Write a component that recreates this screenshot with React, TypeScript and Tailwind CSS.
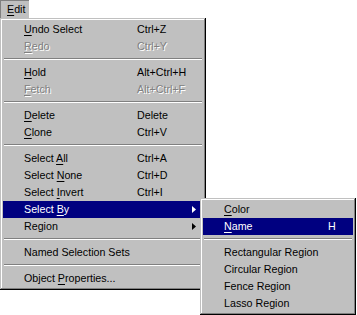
import React from 'react';

type Item =
  | { sep: true }
  | {
      sep?: false;
      label: string;
      mn?: number;
      shortcut?: string;
      disabled?: boolean;
      active?: boolean;
      arrow?: boolean;
    };

const mainItems: Item[] = [
  { label: 'Undo Select', mn: 0, shortcut: 'Ctrl+Z' },
  { label: 'Redo', mn: 0, shortcut: 'Ctrl+Y', disabled: true },
  { sep: true },
  { label: 'Hold', mn: 0, shortcut: 'Alt+Ctrl+H' },
  { label: 'Fetch', mn: 0, shortcut: 'Alt+Ctrl+F', disabled: true },
  { sep: true },
  { label: 'Delete', mn: 0, shortcut: 'Delete' },
  { label: 'Clone', mn: 0, shortcut: 'Ctrl+V' },
  { sep: true },
  { label: 'Select All', mn: 7, shortcut: 'Ctrl+A' },
  { label: 'Select None', mn: 7, shortcut: 'Ctrl+D' },
  { label: 'Select Invert', mn: 7, shortcut: 'Ctrl+I' },
  { label: 'Select By', mn: 7, arrow: true, active: true },
  { label: 'Region', arrow: true },
  { sep: true },
  { label: 'Named Selection Sets' },
  { sep: true },
  { label: 'Object Properties...', mn: 7 },
];

const subItems: Item[] = [
  { label: 'Color', mn: 0 },
  { label: 'Name', mn: 0, shortcut: 'H', active: true },
  { sep: true },
  { label: 'Rectangular Region' },
  { label: 'Circular Region' },
  { label: 'Fence Region' },
  { label: 'Lasso Region' },
];

function Label({ text, mn }: { text: string; mn?: number }) {
  if (mn === undefined) return <>{text}</>;
  return (
    <>
      {text.slice(0, mn)}
      <span className="underline underline-offset-[2px] decoration-1">{text[mn]}</span>
      {text.slice(mn + 1)}
    </>
  );
}

function Menu({ items, labelWidth, className }: { items: Item[]; labelWidth: string; className: string }) {
  return (
    <div
      className={`bg-[#c0c0c0] p-[3px] shadow-[inset_-1px_-1px_0_#000,inset_1px_1px_0_#c0c0c0,inset_-2px_-2px_0_#808080,inset_2px_2px_0_#fff] ${className}`}
    >
      {items.map((it, i) =>
        it.sep ? (
          <div key={i} className="h-[9px] pt-[3px] mx-px">
            <div className="h-px bg-[#808080]" />
            <div className="h-px bg-white" />
          </div>
        ) : (
          <div
            key={i}
            className={`relative flex items-center h-[17px] pl-[21px] whitespace-nowrap ${
              it.active ? 'bg-[#000080] text-white' : it.disabled ? 'text-[#808080] [text-shadow:1px_1px_0_#fff]' : 'text-black'
            }`}
          >
            <span className={labelWidth}>
              <Label text={it.label} mn={it.mn} />
            </span>
            {it.shortcut && <span>{it.shortcut}</span>}
            {it.arrow && (
              <svg
                className="absolute right-[7px] top-[5px]"
                width="4"
                height="7"
                viewBox="0 0 4 7"
              >
                <path d="M0 0 L4 3.5 L0 7 Z" fill={it.active ? '#fff' : '#000'} />
              </svg>
            )}
          </div>
        )
      )}
    </div>
  );
}

export default function App() {
  return (
    <div className="relative w-[357px] h-[315px] bg-white overflow-hidden text-[10.7px] leading-none font-['Liberation_Sans',Arial,sans-serif]">
      {/* Menu bar */}
      <div className="flex h-[18px]">
        <div className="w-[29px] h-[18px] bg-[#c0c0c0] border-t border-l border-[#808080] pl-[6px] flex items-center text-black">
          <Label text="Edit" mn={0} />
        </div>
      </div>

      {/* Edit menu */}
      <Menu items={mainItems} labelWidth="w-[113px]" className="w-[206px]" />

      {/* Select By submenu */}
      <Menu items={subItems} labelWidth="w-[104px]" className="absolute left-[200px] top-[198px] w-[156px]" />
    </div>
  );
}
